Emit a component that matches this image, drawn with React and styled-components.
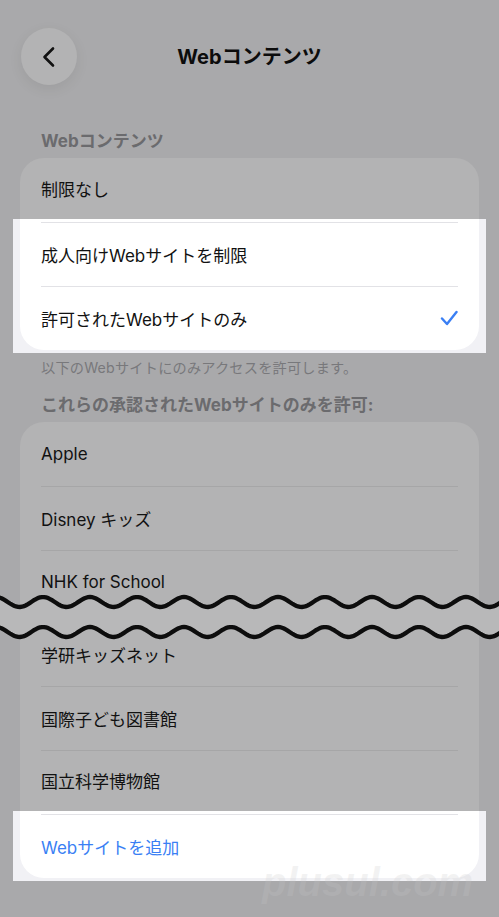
import React from "react";
import styled, { createGlobalStyle } from "styled-components";

const Global = createGlobalStyle`
  html, body { margin: 0; padding: 0; background: #a9a9ab; }
  body { font-family: Inter, "Noto Sans CJK JP", sans-serif; -webkit-font-smoothing: antialiased; }
`;

const Page = styled.div`
  position: relative;
  width: 499px;
  min-height: 917px;
  background: #a9a9ab;
  overflow: hidden;
  display: flex;
  flex-direction: column;
`;

const Header = styled.header`
  display: grid;
  grid-template-columns: 56px 1fr 56px;
  align-items: center;
  height: 57px;
  margin-top: 28px;
  padding: 0 21px;
`;

const BackButton = styled.button`
  width: 56px;
  height: 57px;
  border-radius: 50%;
  border: none;
  padding: 0;
  background: #b3b3b4;
  box-shadow: 0 4px 14px rgba(0, 0, 0, 0.07);
  display: flex;
  align-items: center;
  justify-content: center;
`;

const Title = styled.h1`
  margin: 0;
  text-align: center;
  font-size: 20px;
  font-weight: 700;
  color: #0c0c0c;
  line-height: 24px;
`;

const SectionLabel = styled.div`
  margin: ${(p) => p.$top}px 41px 6px;
  font-size: ${(p) => p.$size}px;
  font-weight: 700;
  line-height: 22px;
  color: #6b6b6e;
`;

const Footnote = styled.div`
  margin: 7px 41px 0;
  font-size: 14.2px;
  line-height: 16px;
  color: #78787b;
  letter-spacing: 0.2px;
`;

const CardPiece = styled.div`
  position: relative;
  margin: 0 ${(p) => (p.$lit ? 0 : 20)}px;
  background: ${(p) => (p.$lit ? "#ffffff" : "#b3b3b4")};
  border-radius: ${(p) => (p.$round === "top" ? "24px 24px 0 0" : p.$round === "bottom" ? "0 0 24px 24px" : "0")};
  padding-top: ${(p) => (p.$lit ? 3 : 0)}px;
`;

const Highlight = styled.div`
  margin: 0 13px;
  padding: 0 7px 3px;
  background: #f1f1f5;
`;

const Row = styled.div`
  position: relative;
  display: flex;
  align-items: center;
  justify-content: space-between;
  height: ${(p) => p.$h || 64}px;
  padding: 0 21px 0 21px;
  box-sizing: border-box;
  font-size: 17px;
  color: ${(p) => (p.$accent ? "#3a7ff4" : "#111111")};
  &::before {
    content: "";
    display: ${(p) => (p.$sep ? "block" : "none")};
    position: absolute;
    top: 0;
    left: 21px;
    right: 21px;
    height: 1px;
    background: ${(p) => (p.$lit ? "#e2e2e6" : "#a6a6a7")};
  }
`;

const Cut = styled.div`
  position: relative;
  height: 8px;
`;

const WaveBand = styled.svg`
  position: absolute;
  left: -20px;
  top: -24px;
  width: 499px;
  height: 52px;
  overflow: visible;
`;

const Watermark = styled.div`
  position: absolute;
  left: 262px;
  top: 862px;
  font-family: "Liberation Sans", Arial, sans-serif;
  font-size: 40px;
  line-height: 40px;
  font-weight: 700;
  font-style: italic;
  color: rgba(200, 200, 200, 0.22);
  pointer-events: none;
`;

function wave(cy) {
  const pts = [];
  for (let x = -10; x <= 510; x += 2) {
    const y = cy - 5 * Math.cos((2 * Math.PI * (x - 43)) / 47);
    pts.push([x, y]);
  }
  return pts;
}

const top = wave(12);
const bot = wave(42);
const topD = "M" + top.map(([x, y]) => `${x},${y.toFixed(2)}`).join(" L");
const botD = "M" + bot.map(([x, y]) => `${x},${y.toFixed(2)}`).join(" L");
const fillD =
  topD +
  " L" +
  bot
    .slice()
    .reverse()
    .map(([x, y]) => `${x},${y.toFixed(2)}`)
    .join(" L") +
  " Z";

const Chevron = () => (
  <svg width="14" height="22" viewBox="0 0 14 22">
    <polyline points="11,2.5 2.5,11 11,19.5" fill="none" stroke="#111" strokeWidth="2.6" strokeLinecap="round" strokeLinejoin="round" />
  </svg>
);

const Check = () => (
  <svg width="18" height="16" viewBox="0 0 18 16">
    <polyline points="2,8.5 7,14 16.5,2" fill="none" stroke="#3a7ff4" strokeWidth="2.4" strokeLinecap="round" strokeLinejoin="round" />
  </svg>
);

export default function App() {
  return (
    <Page>
      <Global />
      <Header>
        <BackButton aria-label="戻る">
          <Chevron />
        </BackButton>
        <Title>Webコンテンツ</Title>
        <span />
      </Header>

      <SectionLabel $top={45} $size={17}>Webコンテンツ</SectionLabel>
      <CardPiece $round="top">
        <Row $h={61}>制限なし</Row>
      </CardPiece>
      <Highlight>
        <CardPiece $lit $round="bottom">
          <Row $sep $lit>成人向けWebサイトを制限</Row>
          <Row $sep $lit>
            許可されたWebサイトのみ
            <Check />
          </Row>
        </CardPiece>
      </Highlight>
      <Footnote>以下のWebサイトにのみアクセスを許可します。</Footnote>

      <SectionLabel $top={18} $size={17}>これらの承認されたWebサイトのみを許可:</SectionLabel>
      <CardPiece $round="top">
        <Row>Apple</Row>
        <Row $sep>Disney キッズ</Row>
        <Row $sep>NHK for School</Row>
        <Cut>
          <WaveBand viewBox="0 0 499 52">
            <path d={fillD} fill="#b8b8b9" />
            <path d={topD} fill="none" stroke="#0d0d0d" strokeWidth="4.3" />
            <path d={botD} fill="none" stroke="#0d0d0d" strokeWidth="4.3" />
          </WaveBand>
        </Cut>
        <Row>学研キッズネット</Row>
        <Row $sep>国際子ども図書館</Row>
        <Row $sep $h={61}>国立科学博物館</Row>
      </CardPiece>
      <Highlight>
        <CardPiece $lit $round="bottom">
          <Row $sep $lit $accent>Webサイトを追加</Row>
        </CardPiece>
      </Highlight>

      <Watermark>plusul.com</Watermark>
    </Page>
  );
}
